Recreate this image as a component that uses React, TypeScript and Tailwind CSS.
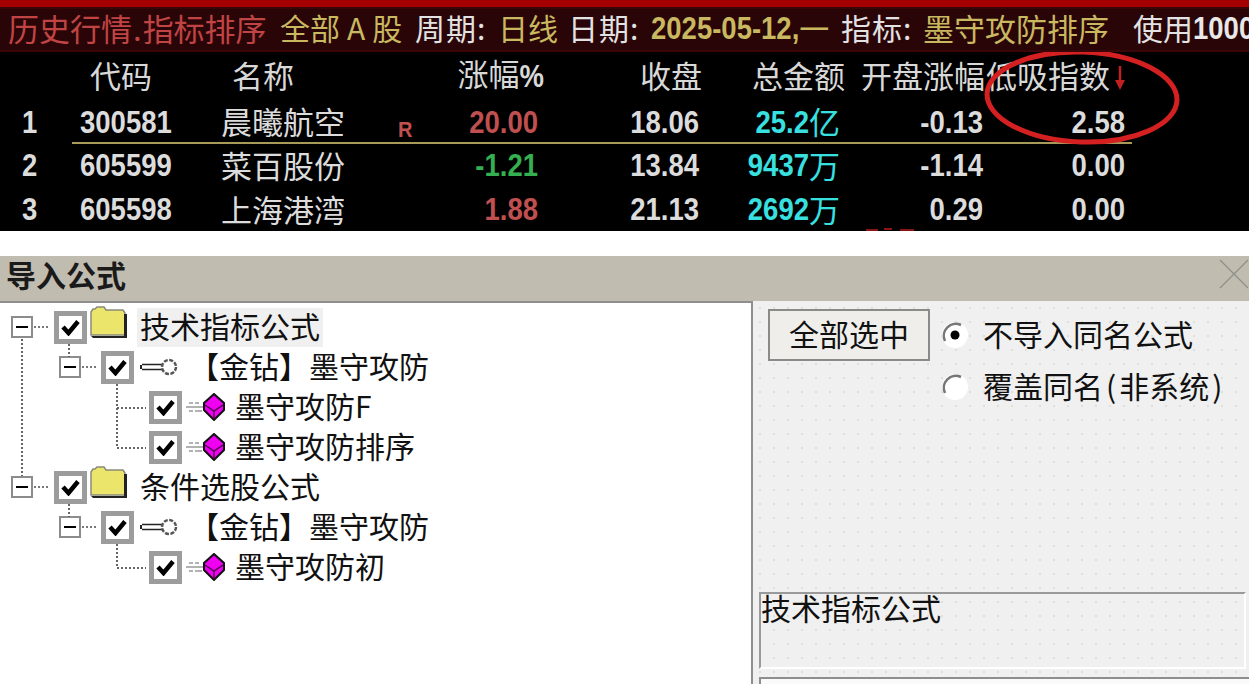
import React from 'react';

// ============================================
// Quote table data
// ============================================

const rows = [
  { no: '1', code: '300581', name: '晨曦航空', flag: 'R', pct: '20.00', pctColor: 'text-[#c05050]', close: '18.06', amt: '25.2', unit: '亿', open: '-0.13', idx: '2.58' },
  { no: '2', code: '605599', name: '菜百股份', flag: '', pct: '-1.21', pctColor: 'text-[#35b050]', close: '13.84', amt: '9437', unit: '万', open: '-1.14', idx: '0.00' },
  { no: '3', code: '605598', name: '上海港湾', flag: '', pct: '1.88', pctColor: 'text-[#c05050]', close: '21.13', amt: '2692', unit: '万', open: '0.29', idx: '0.00' },
];

const gridCols = 'grid grid-cols-[80px_141px_177px_140px_161px_141px_143px_142px] items-center';

function Num({ children, className = '', small = false }: { children: React.ReactNode; className?: string; small?: boolean }) {
  return (
    <span className={`inline-block scale-y-[1.12] font-['Liberation_Sans',sans-serif] leading-none font-bold ${small ? 'text-[20px]' : 'text-[27.5px]'} ${className}`}>
      {children}
    </span>
  );
}

// ============================================
// Top: black market window
// ============================================

function TitleBar() {
  return (
    <div className="flex h-[45px] shrink-0 items-center border-y-2 border-[#3c0608] bg-[#2a0507] pb-[5px] pl-[8px] text-[30px] leading-none whitespace-nowrap text-[#e2e2e2]">
      <span className="w-[272px] shrink-0 text-[31px] text-[#c04444]">历史行情<span className="mx-[1px]">.</span>指标排序</span>
      <span className="w-[135px] shrink-0 text-[#c8b860]">全部<span className="mx-[7px]">A</span>股</span>
      <span className="w-[83px] shrink-0 tracking-[1px]">周期:</span>
      <span className="w-[70px] shrink-0 text-[#c8b860]">日线</span>
      <span className="w-[83px] shrink-0 tracking-[1px]">日期:</span>
      <span className="flex w-[190px] shrink-0 items-center text-[#c8b860]">
        <Num className="translate-y-[2px]">2025-05-12,</Num>
        <span>一</span>
      </span>
      <span className="w-[82px] shrink-0 tracking-[1px]">指标:</span>
      <span className="w-[210px] shrink-0 text-[31px] text-[#c8b860]">墨守攻防排序</span>
      <span className="shrink-0">使用</span>
      <Num className="translate-y-[2px] text-[#e8e8e8]">1000</Num>
    </div>
  );
}

function QuoteTable() {
  return (
    <div className="relative h-[179px] shrink-0 bg-black text-[#dcdcdc]">
      <div className={`${gridCols} h-[49px] pb-[5px] text-[31px] leading-none text-[#d8d8d8]`}>
        <span />
        <span className="pl-[10px]">代码</span>
        <span className="pl-[11px]">名称</span>
        <span className="-mr-[6px] text-right">
          涨幅<Num>%</Num>
        </span>
        <span className="-mr-[3px] text-right">收盘</span>
        <span className="-mr-[5px] text-right">总金额</span>
        <span className="-mr-[2px] text-right">开盘涨幅</span>
        <span className="mr-[15px] text-right">低吸指数</span>
      </div>
      {rows.map((r, i) => (
        <div key={r.no} className={`${gridCols} ${i === 0 ? 'h-[43px]' : 'h-[44px]'}`}>
          <span className="pl-[22px]"><Num>{r.no}</Num></span>
          <span><Num>{r.code}</Num></span>
          <span className="-translate-y-[2px] text-[31px] leading-none">{r.name}</span>
          <span className="flex items-center justify-between">
            <Num small className="translate-y-[6px] text-[#c05050]">{r.flag}</Num>
            <Num className={r.pctColor}>{r.pct}</Num>
          </span>
          <span className="text-right"><Num>{r.close}</Num></span>
          <span className="flex items-center justify-end text-[#38e0e0]">
            <Num>{r.amt}</Num>
            <span className="-translate-y-[2px] text-[31px] leading-none">{r.unit}</span>
          </span>
          <span className="text-right"><Num>{r.open}</Num></span>
          <span className="text-right"><Num>{r.idx}</Num></span>
        </div>
      ))}
      {/* gold rule under the selected row */}
      <div className="absolute top-[90px] left-[72px] h-[2px] w-[1060px] bg-[#a89a58]" />
      {/* hand drawn mark */}
      <svg className="pointer-events-none absolute top-0 left-0" width="1249" height="179" fill="none">
        <ellipse cx="1082" cy="45" rx="95" ry="45" stroke="#d42020" strokeWidth="5" transform="rotate(2 1082 45)" />
        <path d="M1120 14V30" stroke="#c02020" strokeWidth="2.5" />
        <path d="M1115 28h10l-5 10z" fill="#c02020" />
        <path d="M866 178h12M884 177h8M900 178h14" stroke="#8a1414" strokeWidth="2" />
      </svg>
    </div>
  );
}

// ============================================
// Bottom: import dialog icons
// ============================================

function Expander() {
  return (
    <span className="flex h-[22px] w-[22px] shrink-0 items-center justify-center border-2 border-[#8c8c8c] bg-white">
      <span className="h-[2px] w-[12px] bg-black" />
    </span>
  );
}

function CheckBox() {
  return (
    <span className="flex h-[33px] w-[33px] shrink-0 items-center justify-center border-[5px] border-[#9c9c9c] bg-white">
      <svg width="19" height="17" viewBox="0 0 19 17" fill="none">
        <path d="M2 8 7.5 14 17 2.5" stroke="#000" strokeWidth="4.5" />
      </svg>
    </span>
  );
}

function FolderIcon() {
  return (
    <svg width="38" height="34" viewBox="0 0 38 34" className="shrink-0">
      <path d="M1 29V6l2-3h2l2-2h7l2 3h17l2 3v22z" fill="#ece56c" stroke="#8a8a7a" strokeWidth="1.5" />
      <path d="M1 30h33V8h3v24H3z" fill="#222" />
    </svg>
  );
}

function KeyIcon() {
  return (
    <svg width="38" height="20" viewBox="0 0 38 20" fill="none" className="shrink-0">
      <path d="M2 7.5h20M2 12.5h20" stroke="#222" strokeWidth="1.6" />
      <path d="M1 8v4" stroke="#222" strokeWidth="2" />
      <circle cx="29" cy="10" r="7" stroke="#555" strokeWidth="2.5" strokeDasharray="4 1.5" />
    </svg>
  );
}

function CubeIcon() {
  return (
    <svg width="39" height="28" viewBox="0 0 39 28" fill="none" className="shrink-0">
      <path d="M3 10h4M9 10h4M0 14h17M3 18h4M9 18h7" stroke="#999" strokeWidth="1.5" />
      <path d="M28 1 38 10v7l-10 10-10-10v-7z" fill="#f000f0" stroke="#111" strokeWidth="2" />
      <path d="M19 12l9 6 9-6M28 18v8" stroke="#500050" strokeWidth="1.5" />
    </svg>
  );
}

function Radio({ checked }: { checked?: boolean }) {
  return (
    <svg width="30" height="30" viewBox="0 0 30 30" className="shrink-0">
      <circle cx="16" cy="15" r="13" fill="#fff" />
      <path d="M6 21A12 12 0 0 1 22 5" fill="none" stroke="#777" strokeWidth="2.5" />
      {checked && <circle cx="16" cy="15" r="4.5" fill="#000" />}
    </svg>
  );
}

function Dots({ className = '' }: { className?: string }) {
  return <span className={`h-0 shrink-0 border-t-2 border-dotted border-[#777] ${className}`} />;
}

// ============================================
// Import dialog tree
// ============================================

function GroupRow({ label, active }: { label: string; active?: boolean }) {
  return (
    <div className="flex h-10 items-center pl-[11px]">
      <Expander />
      <Dots className="mr-[6px] ml-[1px] w-[14px]" />
      <CheckBox />
      <span className="ml-[3px] -translate-y-[4px]"><FolderIcon /></span>
      <span className={`ml-[9px] flex h-[39px] items-center px-[3px] pb-[4px] ${active ? 'bg-[#f0f0f0]' : ''}`}>{label}</span>
    </div>
  );
}

function SetRow() {
  return (
    <div className="flex h-10 items-center pl-[59px]">
      <Expander />
      <Dots className="mr-[5px] ml-[1px] w-[14px]" />
      <CheckBox />
      <span className="ml-[6px] w-[49px]"><KeyIcon /></span>
      <span className="pb-[4px]">【金钻】墨守攻防</span>
    </div>
  );
}

function LeafRow({ label }: { label: string }) {
  return (
    <div className="flex h-10 items-center pl-[149px]">
      <CheckBox />
      <span className="ml-[4px] w-[49px]"><CubeIcon /></span>
      <span className="pb-[4px]">{label}</span>
    </div>
  );
}

function TreePane() {
  return (
    <div className="relative w-[753px] shrink-0 border-t-2 border-r-2 border-[#8e8e8e] bg-white pt-[4px] text-[30px] leading-none text-[#111]">
      <GroupRow label="技术指标公式" active />
      <SetRow />
      <LeafRow label="墨守攻防F" />
      <LeafRow label="墨守攻防排序" />
      <GroupRow label="条件选股公式" />
      <SetRow />
      <LeafRow label="墨守攻防初" />
      {/* tree guide lines */}
      <svg className="pointer-events-none absolute top-0 left-0" width="200" height="300" fill="none" stroke="#666" strokeWidth="2" strokeDasharray="2 2">
        <path d="M22 36V173M69 41V54M117 81V145H146M117 105H146M69 201V214M117 241V265H146" />
      </svg>
    </div>
  );
}

// ============================================
// Import dialog options
// ============================================

function OptionsPane() {
  return (
    <div className="flex min-w-0 flex-1 flex-col bg-[#f0f0f0] bg-[radial-gradient(#e0ded8_1px,transparent_1px)] bg-[size:14px_14px] pl-[5px] text-[30px] leading-none text-[#111]">
      <div className="flex pt-[8px] pl-[10px]">
        <button className="h-[52px] w-[162px] shrink-0 border-2 border-[#8a8a88] bg-[#efeeeb] pb-[4px] text-center">全部选中</button>
        <div className="ml-[9px] flex flex-col">
          <div className="flex h-[52px] items-center">
            <Radio checked />
            <span className="ml-[14px] pb-[4px]">不导入同名公式</span>
          </div>
          <div className="flex h-[52px] items-center">
            <Radio />
            <span className="ml-[14px] pb-[4px] whitespace-nowrap">
              覆盖同名<span className="mx-[3px]">(</span>非系统<span className="mx-[3px]">)</span>
            </span>
          </div>
        </div>
      </div>
      <div className="mt-[179px] mr-[3px] ml-[1px] h-[77px] shrink-0 border-2 border-t-[#9a9a9a] border-r-white border-b-white border-l-[#9a9a9a]">
        <span className="block -translate-y-[2px]">技术指标公式</span>
      </div>
      <div className="mt-[8px] ml-[1px] flex-1 border-t-2 border-l-2 border-[#8e8e8e] bg-[#fafafa]" />
    </div>
  );
}

// ============================================
// Page
// ============================================

export default function App() {
  return (
    <div className="flex h-[684px] w-full flex-col overflow-hidden bg-white font-['Noto_Sans_CJK_SC','Liberation_Sans',sans-serif]">
      <div className="h-[7px] shrink-0 bg-[#a50000]" />
      <TitleBar />
      <QuoteTable />
      <div className="h-[25px] shrink-0 bg-white" />
      <div className="flex h-[45px] shrink-0 items-center justify-between bg-[#c0bcb0] pr-0 pb-[10px] pl-[6px] leading-none font-bold text-[#1a1a1a]">
        <span className="text-[30px]">导入公式</span>
        <svg width="30" height="30" viewBox="0 0 30 30" fill="none" stroke="#8f8f8a" strokeWidth="1.2">
          <path d="M1 1 29 29M29 1 1 29" />
        </svg>
      </div>
      <div className="flex min-h-0 flex-1">
        <TreePane />
        <OptionsPane />
      </div>
    </div>
  );
}
